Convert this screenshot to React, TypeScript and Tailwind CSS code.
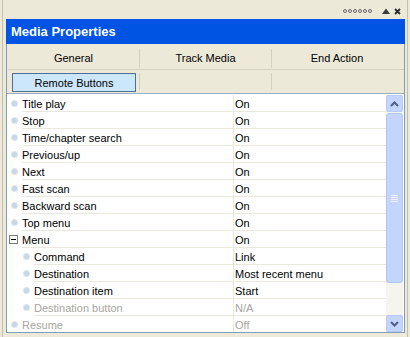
import React from "react";

type Row = {
  name: string;
  value: string;
  level: 0 | 1;
  group?: boolean;
  disabled?: boolean;
};

const rows: Row[] = [
  { name: "Title play", value: "On", level: 0 },
  { name: "Stop", value: "On", level: 0 },
  { name: "Time/chapter search", value: "On", level: 0 },
  { name: "Previous/up", value: "On", level: 0 },
  { name: "Next", value: "On", level: 0 },
  { name: "Fast scan", value: "On", level: 0 },
  { name: "Backward scan", value: "On", level: 0 },
  { name: "Top menu", value: "On", level: 0 },
  { name: "Menu", value: "On", level: 0, group: true },
  { name: "Command", value: "Link", level: 1 },
  { name: "Destination", value: "Most recent menu", level: 1 },
  { name: "Destination item", value: "Start", level: 1 },
  { name: "Destination button", value: "N/A", level: 1, disabled: true },
  { name: "Resume", value: "Off", level: 0, disabled: true },
];

const font = { fontFamily: '"Liberation Sans", Arial, sans-serif' };

function Bullet() {
  return (
    <span className="inline-block h-[5px] w-[5px] shrink-0 rounded-full bg-[#C9D6E4] ring-1 ring-[#DCE5EE]" />
  );
}

function MinusBox() {
  return (
    <span className="flex h-[9px] w-[9px] shrink-0 items-center justify-center border border-[#7A7A7A] bg-white">
      <span className="h-px w-[5px] bg-black" />
    </span>
  );
}

function PropRow({ row }: { row: Row }) {
  const text = row.disabled ? "text-[#A7A6A0]" : "text-black";
  return (
    <div className="flex h-[17px]">
      <div className="flex w-[226px] shrink-0">
        <div
          className={`flex h-full shrink-0 items-center ${
            row.group
              ? "w-[15px] pl-[2px]"
              : row.level === 0
                ? "w-[15px] pl-[5px]"
                : "w-[27px] pl-[17px]"
          }`}
        >
          {row.group ? <MinusBox /> : <Bullet />}
        </div>
        <div
          className={`flex flex-1 items-center border-b border-[#EAE8DC] pt-[2px] text-[11px] ${text}`}
        >
          {row.name}
        </div>
      </div>
      <div
        className={`flex flex-1 items-center border-b border-l border-[#EAE8DC] pl-[1px] pt-[2px] text-[11px] ${text}`}
      >
        {row.value}
      </div>
    </div>
  );
}

function Chevron({ up }: { up?: boolean }) {
  return (
    <svg width="9" height="6" viewBox="0 0 9 6">
      <path
        d={up ? "M1 5 L4.5 1.5 L8 5" : "M1 1 L4.5 4.5 L8 1"}
        fill="none"
        stroke="#4D6185"
        strokeWidth="2"
      />
    </svg>
  );
}

function ScrollBar() {
  return (
    <div className="flex w-[17px] shrink-0 flex-col bg-[#F5F4EE]">
      <div className="flex h-[17px] items-center justify-center rounded-[2px] border border-[#B7CBF5] bg-[#C3D5FD]">
        <Chevron up />
      </div>
      <div className="mt-px flex h-[170px] items-center justify-center rounded-[3px] border border-[#B2C6F2] bg-[#C3D5FD]">
        <div className="flex flex-col gap-px">
          <span className="h-px w-[7px] bg-[#EEF3FF]" />
          <span className="h-px w-[7px] bg-[#EEF3FF]" />
          <span className="h-px w-[7px] bg-[#EEF3FF]" />
          <span className="h-px w-[7px] bg-[#EEF3FF]" />
        </div>
      </div>
      <div className="flex-1" />
      <div className="flex h-[17px] items-center justify-center rounded-[2px] border border-[#B7CBF5] bg-[#C3D5FD]">
        <Chevron />
      </div>
    </div>
  );
}

export default function App() {
  return (
    <div
      className="h-[337px] w-[410px] overflow-hidden bg-[#ECE9D8] px-[2px]"
      style={font}
    >
      <div className="flex h-full flex-col border-x border-[#C3C0AE] pl-[3px] pr-[2px]">
        <div className="flex h-[19px] items-center justify-end pr-[4px] pt-[3px]">
          <div className="flex gap-[1px]">
            {[0, 1, 2, 3, 4, 5].map((i) => (
              <span
                key={i}
                className="h-[4px] w-[4px] rounded-full border border-[#6A6A6A]"
              />
            ))}
          </div>
          <svg width="8" height="6" viewBox="0 0 8 6" className="ml-[10px]">
            <path d="M0 6 L4 0.5 L8 6 Z" fill="#3A3A3A" />
          </svg>
          <svg width="7" height="7" viewBox="0 0 7 7" className="ml-[4px]">
            <path
              d="M1 1 L6 6 M6 1 L1 6"
              stroke="#2A2A2A"
              strokeWidth="1.8"
            />
          </svg>
        </div>
        <div className="flex h-[25px] items-center bg-[#0054E3] pl-[5px] pt-px text-[13px] font-bold text-white">
          Media Properties
        </div>
        <div className="flex h-[289px] flex-col border border-[#7F9DB9] border-t-0 bg-white">
          <div className="flex flex-col bg-[#ECE9D8] pl-[1px]">
            <div className="grid h-[26px] grid-cols-[131px_132px_131px] border-b border-[#D6D2C2] pt-[4px] text-[11px]">
              <div className="flex items-center justify-center">General</div>
              <div className="my-[1px] flex items-center justify-center border-l border-[#D6D2C2]">
                Track Media
              </div>
              <div className="my-[1px] flex items-center justify-center border-l border-[#D6D2C2]">
                End Action
              </div>
            </div>
            <div className="grid h-[23px] grid-cols-[131px_132px_131px] text-[11px]">
              <div className="flex items-center pl-[4px] pt-px">
                <div className="flex h-[19px] w-[124px] items-center justify-center border border-[#4F6E96] bg-[#CCE6FB] pt-[2px]">
                  Remote Buttons
                </div>
              </div>
              <div className="my-[3px] border-l border-[#D6D2C2]" />
              <div className="my-[3px] border-l border-[#D6D2C2]" />
            </div>
          </div>
          <div className="h-px bg-[#98AEC8]" />
          <div className="flex flex-1 overflow-hidden pt-px">
            <div className="flex-1 overflow-hidden">
              {rows.map((r) => (
                <PropRow key={r.name} row={r} />
              ))}
            </div>
            <div className="flex pr-[1px]">
              <ScrollBar />
            </div>
          </div>
        </div>
      </div>
    </div>
  );
}
